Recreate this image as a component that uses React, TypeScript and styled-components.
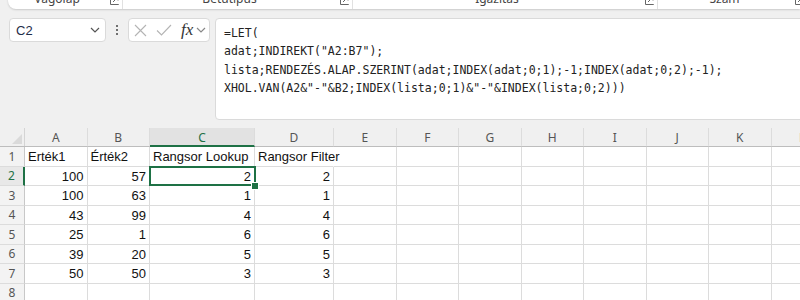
import React from 'react';
import styled, { createGlobalStyle } from 'styled-components';

const GlobalStyle = createGlobalStyle`
  html, body {
    margin: 0;
    padding: 0;
    background: #f0f0f0;
    overflow: hidden;
  }
  body {
    font-family: "Liberation Sans", Arial, sans-serif;
  }
`;

const GREEN = '#1e7145';

const ribbonGroups = [
  { label: 'Vágólap', width: 115 },
  { label: 'Betűtípus', width: 230 },
  { label: 'Igazítás', width: 305 },
  { label: 'Szám', width: 150 },
];

const formulaLines = [
  '=LET(',
  'adat;INDIREKT("A2:B7");',
  'lista;RENDEZÉS.ALAP.SZERINT(adat;INDEX(adat;0;1);-1;INDEX(adat;0;2);-1);',
  'XHOL.VAN(A2&"-"&B2;INDEX(lista;0;1)&"-"&INDEX(lista;0;2)))',
];

const columns = [
  { name: 'A', width: 62.5 },
  { name: 'B', width: 62.5 },
  { name: 'C', width: 105 },
  { name: 'D', width: 79 },
  { name: 'E', width: 62.5 },
  { name: 'F', width: 62.5 },
  { name: 'G', width: 62.5 },
  { name: 'H', width: 62.5 },
  { name: 'I', width: 62.5 },
  { name: 'J', width: 62.5 },
  { name: 'K', width: 62.5 },
  { name: 'L', width: 62.5 },
];

const rows: (string | number)[][] = [
  ['Erték1', 'Érték2', 'Rangsor Lookup', 'Rangsor Filter'],
  [100, 57, 2, 2],
  [100, 63, 1, 1],
  [43, 99, 4, 4],
  [25, 1, 6, 6],
  [39, 20, 5, 5],
  [50, 50, 3, 3],
  [],
];

const Launcher = () => (
  <svg width="9" height="9" viewBox="0 0 9 9" fill="none" stroke="#666" strokeWidth="1">
    <path d="M1 0.5 H0.5 V8.5 H8.5 V8" />
    <path d="M3 6 L8 1 M4.5 1 H8 V4.5" />
  </svg>
);

const Chevron = ({ color = '#555' }: { color?: string }) => (
  <svg width="10" height="6" viewBox="0 0 10 6" fill="none" stroke={color} strokeWidth="1.2">
    <path d="M1 1 L5 5 L9 1" />
  </svg>
);

export default function App() {
  return (
    <>
      <GlobalStyle />
      <Page>
        <Ribbon>
          {ribbonGroups.map((g) => (
            <RibbonGroup key={g.label} $width={g.width}>
              <RibbonLabel>{g.label}</RibbonLabel>
              <LauncherBox>
                <Launcher />
              </LauncherBox>
            </RibbonGroup>
          ))}
        </Ribbon>

        <FormulaBar>
          <NameBox>
            <NameText>C2</NameText>
            <Chevron />
          </NameBox>
          <Dots>
            <span />
            <span />
            <span />
          </Dots>
          <FxBox>
            <svg width="13" height="13" viewBox="0 0 13 13" stroke="#b4b4b4" strokeWidth="1.1">
              <path d="M1 1 L12 12 M12 1 L1 12" />
            </svg>
            <svg width="16" height="12" viewBox="0 0 16 12" fill="none" stroke="#b4b4b4" strokeWidth="1.1">
              <path d="M1 6.5 L5.5 11 L15 1" />
            </svg>
            <FxLabel>fx</FxLabel>
            <Chevron color="#888" />
          </FxBox>
          <FormulaBox>
            {formulaLines.map((line) => (
              <FormulaLine key={line}>{line}</FormulaLine>
            ))}
          </FormulaBox>
        </FormulaBar>

        <Sheet>
          <HeaderRow>
            <Corner>
              <Triangle />
            </Corner>
            {columns.map((c) => (
              <ColHeader key={c.name} $width={c.width} $active={c.name === 'C'}>
                {c.name}
              </ColHeader>
            ))}
          </HeaderRow>
          {rows.map((r, ri) => (
            <Row key={ri}>
              <RowHeader $active={ri === 1}>{ri + 1}</RowHeader>
              {columns.map((c, ci) => {
                const value = r[ci];
                return (
                  <Cell
                    key={c.name}
                    $width={c.width}
                    $numeric={typeof value === 'number'}
                    $selected={ri === 1 && ci === 2}
                    $overflow={ri === 0 && ci === 3}
                  >
                    {value}
                  </Cell>
                );
              })}
            </Row>
          ))}
        </Sheet>
      </Page>
    </>
  );
}

const Page = styled.div`
  width: 800px;
  height: 300px;
  overflow: hidden;
`;

const Ribbon = styled.div`
  display: flex;
  margin: -14px 0 0 8px;
  height: 23px;
  background: #fff;
  border-radius: 0 0 0 8px;
  box-shadow: 0 1px 2px rgba(0, 0, 0, 0.16);
  font-family: "Noto Sans", "Open Sans", sans-serif;
  font-size: 12px;
  color: #444;
`;

const RibbonGroup = styled.div<{ $width: number }>`
  flex: none;
  width: ${(p) => p.$width}px;
  display: flex;
  align-items: flex-start;
  padding-top: 3px;
  box-sizing: border-box;
  border-right: 1px solid #e1e1e1;
  height: 21px;
  margin-top: 2px;
`;

const RibbonLabel = styled.div`
  flex: 1;
  text-align: center;
  line-height: 16px;
`;

const LauncherBox = styled.div`
  width: 16px;
  padding-top: 5px;
  display: flex;
  justify-content: center;
`;

const FormulaBar = styled.div`
  display: flex;
  align-items: flex-start;
  margin-top: 9px;
  padding-left: 9px;
  height: 102px;
`;

const NameBox = styled.div`
  width: 97px;
  height: 24px;
  box-sizing: border-box;
  display: flex;
  align-items: center;
  justify-content: space-between;
  padding: 0 5px 0 6px;
  background: #fff;
  border: 1px solid #dadada;
  border-radius: 4px;
`;

const NameText = styled.span`
  font-family: "Liberation Sans", Arial, sans-serif;
  font-size: 13px;
  color: #1f2d4a;
`;

const Dots = styled.div`
  width: 22px;
  height: 24px;
  display: flex;
  flex-direction: column;
  align-items: center;
  justify-content: center;
  gap: 2px;

  span {
    width: 2px;
    height: 2px;
    background: #444;
    border-radius: 1px;
  }
`;

const FxBox = styled.div`
  width: 82px;
  height: 24px;
  box-sizing: border-box;
  display: flex;
  align-items: center;
  gap: 9px;
  padding-left: 5px;
  background: #fff;
  border: 1px solid #dadada;
  border-radius: 4px;

  svg:last-child {
    margin-left: -6px;
  }
`;

const FxLabel = styled.span`
  font-family: "Liberation Serif", "Times New Roman", serif;
  font-style: italic;
  font-size: 17px;
  color: #333;
  line-height: 1;
  margin-bottom: 2px;
`;

const FormulaBox = styled.div`
  flex: 1;
  margin-left: 5px;
  margin-right: -6px;
  height: 102px;
  box-sizing: border-box;
  padding: 5px 8px;
  background: #fff;
  border: 1px solid #dadada;
  border-radius: 4px;
`;

const FormulaLine = styled.div`
  font-family: "DejaVu Sans Mono", "Liberation Mono", monospace;
  font-size: 11.5px;
  line-height: 18.3px;
  color: #222;
  white-space: pre;
`;

const Sheet = styled.div`
  margin-top: 8px;
`;

const HeaderRow = styled.div`
  display: flex;
  height: 18px;
  background: #f0f0f0;
  border-bottom: 1px solid #bdbdbd;
  box-sizing: content-box;
`;

const Corner = styled.div`
  flex: none;
  width: 25px;
  position: relative;
  box-sizing: border-box;
  border-right: 1px solid #d4d4d4;
  display: flex;
  align-items: flex-end;
  justify-content: flex-end;
  padding: 0 2px 2px 0;
`;

const Triangle = styled.span`
  width: 0;
  height: 0;
  border-left: 10px solid transparent;
  border-bottom: 10px solid #dadada;
`;

const ColHeader = styled.div<{ $width: number; $active?: boolean }>`
  flex: none;
  width: ${(p) => p.$width}px;
  box-sizing: border-box;
  display: flex;
  align-items: center;
  justify-content: center;
  font-family: "Noto Sans", "Open Sans", sans-serif;
  font-size: 12px;
  color: ${(p) => (p.$active ? GREEN : '#555')};
  background: ${(p) => (p.$active ? '#e2e2e2' : 'transparent')};
  border-right: 1px solid #dcdcdc;
  border-bottom: 2px solid ${(p) => (p.$active ? GREEN : 'transparent')};
  margin-bottom: -1px;
  padding-top: 1px;
`;

const Row = styled.div`
  display: flex;
  height: 19.5px;
  background: #fff;
`;

const RowHeader = styled.div<{ $active?: boolean }>`
  flex: none;
  width: 25px;
  box-sizing: border-box;
  display: flex;
  align-items: center;
  justify-content: center;
  font-family: "Noto Sans", "Open Sans", sans-serif;
  font-size: 12px;
  color: ${(p) => (p.$active ? GREEN : '#555')};
  background: ${(p) => (p.$active ? '#e8e8e8' : '#f3f3f3')};
  border-right: ${(p) => (p.$active ? `2px solid ${GREEN}` : '1px solid #c8c8c8')};
  border-bottom: 1px solid #dcdcdc;
`;

const Cell = styled.div<{
  $width: number;
  $numeric?: boolean;
  $selected?: boolean;
  $overflow?: boolean;
}>`
  flex: none;
  width: ${(p) => p.$width}px;
  box-sizing: border-box;
  display: flex;
  align-items: center;
  justify-content: ${(p) => (p.$numeric ? 'flex-end' : 'flex-start')};
  padding: 1px 3px 0;
  white-space: nowrap;
  font-family: "Liberation Sans", Arial, sans-serif;
  font-size: 13px;
  color: #111;
  border-right: 1px solid ${(p) => (p.$overflow ? 'transparent' : '#dcdcdc')};
  border-bottom: 1px solid #dcdcdc;
  position: ${(p) => (p.$selected ? 'relative' : 'static')};

  ${(p) =>
    p.$selected &&
    `
    &::after {
      content: '';
      position: absolute;
      top: -1px;
      left: -1px;
      right: -2px;
      bottom: -1px;
      border: 2px solid ${GREEN};
    }
    &::before {
      content: '';
      position: absolute;
      right: -5px;
      bottom: -5px;
      width: 6px;
      height: 6px;
      background: ${GREEN};
      border: 1px solid #fff;
      z-index: 2;
    }
  `}
`;
